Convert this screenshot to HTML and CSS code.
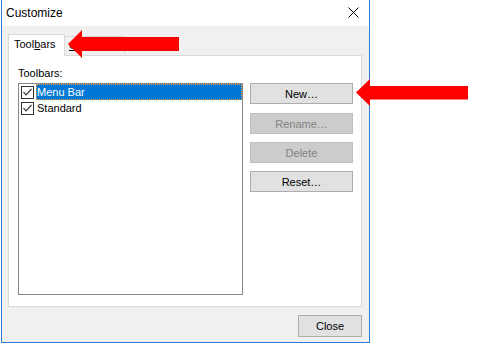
FILE: index.html
```html
<!DOCTYPE html>
<html>
<head>
<meta charset="utf-8">
<title>Customize</title>
<link rel="stylesheet" href="styles.css">
</head>
<body>
<div class="window">
  <div class="titlebar">
    <span class="title">Customize</span>
    <svg class="close-x" width="11" height="11" viewBox="0 0 11 11"><path d="M0.5 0.5 L10.5 10.5 M10.5 0.5 L0.5 10.5" stroke="#000" stroke-width="1" fill="none"/></svg>
  </div>
  <div class="body">
    <div class="tabs">
      <div class="tab active">Tool<u>b</u>ars</div>
      <div class="tab"><u>C</u>ommands</div>
    </div>
    <div class="panel">
      <div class="label">Toolbars:</div>
      <div class="panel-row">
        <div class="listbox">
          <div class="item">
            <span class="check"><svg width="11" height="11" viewBox="0 0 11 11"><polyline points="1.5,5 4,7.8 9.5,2" stroke="#3c3c3c" stroke-width="1.2" fill="none"/></svg></span>
            <span class="item-label selected">Menu Bar</span>
          </div>
          <div class="item">
            <span class="check"><svg width="11" height="11" viewBox="0 0 11 11"><polyline points="1.5,5 4,7.8 9.5,2" stroke="#3c3c3c" stroke-width="1.2" fill="none"/></svg></span>
            <span class="item-label">Standard</span>
          </div>
        </div>
        <div class="buttons">
          <button class="btn first">New…</button>
          <button class="btn" disabled>Rename…</button>
          <button class="btn" disabled>Delete</button>
          <button class="btn">Reset…</button>
        </div>
      </div>
    </div>
    <div class="footer">
      <button class="btn close">Close</button>
    </div>
  </div>
</div>
<svg class="overlay" width="488" height="346" viewBox="0 0 488 346">
  <polygon points="68,44 82,30 82,37 179,37 179,51 82,51 82,58" fill="#ff0000"/>
  <polygon points="356,92.5 370,79 370,86 468,86 468,99.5 370,99.5 370,106" fill="#ff0000"/>
</svg>
</body>
</html>
```
FILE: styles.css
```css
html, body {
  margin: 0;
  padding: 0;
  background: #ffffff;
}
body {
  font-family: "Liberation Sans", Arial, sans-serif;
  font-size: 11px;
  color: #000;
  position: relative;
  width: 488px;
  height: 346px;
  overflow: hidden;
}
.window {
  margin-left: 1px;
  width: 369px;
  height: 343px;
  box-sizing: border-box;
  border: 1px solid #2b7fd4;
  border-top: none;
  background: #f0f0f0;
  display: flex;
  flex-direction: column;
}
.titlebar {
  height: 26px;
  flex: none;
  background: #ffffff;
  display: flex;
  align-items: flex-start;
  justify-content: space-between;
  padding: 0 10px 0 4px;
}
.title {
  font-size: 12px;
  line-height: 26px;
}
.close-x {
  margin-top: 7px;
  display: block;
}
.body {
  flex: 1;
  display: flex;
  flex-direction: column;
  padding: 8px 7px 0 6px;
}
.tabs {
  display: flex;
  align-items: flex-end;
  height: 22px;
  margin-bottom: -1px;
  position: relative;
  z-index: 1;
}
.tab {
  box-sizing: border-box;
  height: 20px;
  width: 60px;
  border: 1px solid #d9d9d9;
  border-left: none;
  background: #f0f0f0;
  padding: 1px 0 0 4px;
  line-height: 15px;
  white-space: nowrap;
  overflow: hidden;
}
.tab.active {
  width: 57px;
  height: 22px;
  border-left: 1px solid #d9d9d9;
  border-bottom: none;
  background: #ffffff;
  padding: 2px 0 0 5px;
}
.panel {
  border: 1px solid #d9d9d9;
  background: #ffffff;
  padding: 10px 8px 11px 9px;
}
.label {
  line-height: 15px;
  margin-bottom: 2px;
}
.panel-row {
  display: flex;
  align-items: flex-start;
}
.listbox {
  box-sizing: border-box;
  width: 225px;
  height: 212px;
  border: 1px solid #828790;
  background: #ffffff;
}
.item {
  display: flex;
  height: 16px;
  padding-left: 2px;
}
.check {
  box-sizing: border-box;
  width: 13px;
  height: 13px;
  margin-top: 2px;
  border: 1px solid #333333;
  background: #ffffff;
  display: block;
}
.check svg {
  display: block;
}
.item-label {
  flex: 1;
  box-sizing: border-box;
  height: 16px;
  margin-left: 2px;
  border: 1px solid transparent;
  line-height: 14px;
  white-space: nowrap;
}
.item-label.selected {
  background: #0078d7;
  color: #ffffff;
  border: 1px dotted #f7a13c;
}
.buttons {
  margin-left: 7px;
  width: 103px;
  display: flex;
  flex-direction: column;
  gap: 8px;
}
.btn {
  box-sizing: border-box;
  height: 21px;
  border: 1px solid #adadad;
  background: #e1e1e1;
  color: #000;
  font-family: "Liberation Sans", Arial, sans-serif;
  font-size: 11px;
  padding: 0;
  margin: 0;
  border-radius: 0;
}
.btn.first {
  margin-bottom: 1px;
}
.btn:disabled {
  background: #cccccc;
  border-color: #bfbfbf;
  color: #838383;
}
.footer {
  display: flex;
  justify-content: flex-end;
  margin-top: 8px;
}
.btn.close {
  width: 64px;
  height: 22px;
}
.overlay {
  position: absolute;
  left: 0;
  top: 0;
  z-index: 10;
  pointer-events: none;
}
```
